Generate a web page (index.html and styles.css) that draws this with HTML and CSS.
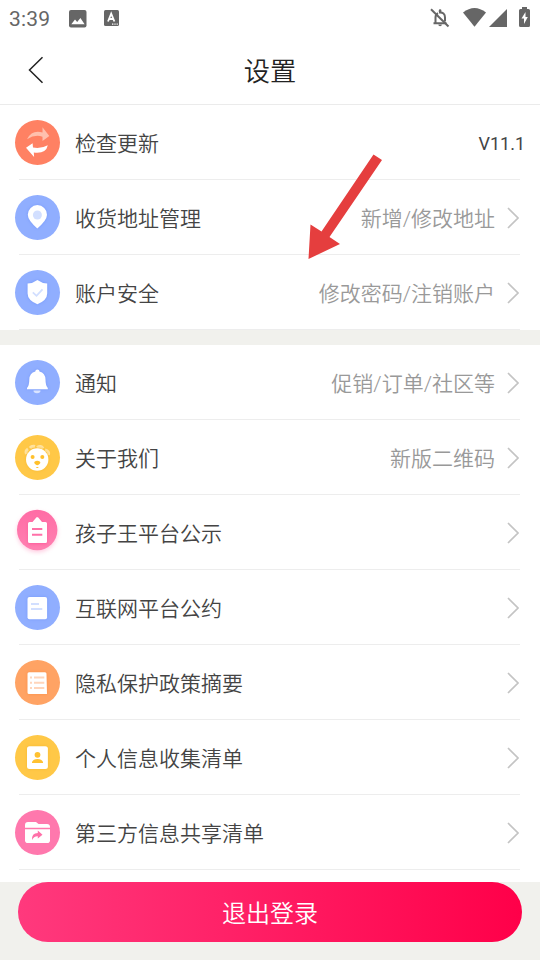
FILE: index.html
```html
<!DOCTYPE html>
<html lang="zh-CN">
<head>
<meta charset="utf-8">
<title>设置</title>
<link rel="stylesheet" href="styles.css">
</head>
<body>
<div class="screen">
  <div class="status">
    <span class="clock">3:39</span>
    <svg class="st-picture" width="18" height="18" viewBox="0 0 18 18"><rect width="17.5" height="17.5" rx="2" fill="#666"/><path d="M2.3 14.3 6 9.5l2.2 2.6 3.2-4.2 4.2 6.4z" fill="#fff"/></svg>
    <svg class="st-input" width="15" height="16" viewBox="0 0 15 16"><rect width="15" height="16" rx="1.5" fill="#666"/><path d="M4 11.500 7.200 3.700 10.400 11.500M5.200 9h4" fill="none" stroke="#fff" stroke-width="1.800"/><path d="M8 14.200h1.400m1 0h1.200m1 0h1.200" stroke="#fff" stroke-width="1.300"/></svg>
    <span class="spacer"></span>
    <svg class="st-bell" width="20" height="20" viewBox="0 0 20 20"><path d="M3.500 15.200h13M5.500 15V9.500q0-3.100 2.500-4.400M9 4.500q6-.7 6 5v4" fill="none" stroke="#666" stroke-width="2"/><path d="M8.800 4V2.500a1.300 1.300 0 0 1 2.600 0V4zM8.300 16.500h3.600a1.800 1.800 0 0 1-3.600 0z" fill="#666"/><path d="m1 1.300 17.500 17.200" stroke="#666" stroke-width="2"/></svg>
    <svg class="st-wifi" width="24" height="19" viewBox="0 0 24 19"><path d="M0 4.500Q11.500-4.500 23 4.500L11.500 18.700z" fill="#666"/></svg>
    <svg class="st-cell" width="18" height="18" viewBox="0 0 18 18"><path d="M0 18 18 0v18z" fill="#666"/></svg>
    <svg class="st-battery" width="11" height="20" viewBox="0 0 11 20"><path d="M1.500 2H3V0h5v2h1.500Q11 2 11 3.500v15q0 1.500-1.500 1.500h-8Q0 20 0 18.500v-15Q0 2 1.500 2z" fill="#666"/><path d="M6.500 5 2.500 11.500H5V17l3.800-7H6.500z" fill="#fff"/></svg>
  </div>
  <header class="header">
    <svg class="back" width="16" height="28" viewBox="0 0 16 28"><path d="M14.500 1.200 1.500 14l13 12.800" fill="none" stroke="#222" stroke-width="1.500"/></svg>
    <h1>设置</h1>
  </header>
  <main class="content">
    <ul class="group">
      <li class="row">
        <svg class="icon" viewBox="0 0 45 45"><circle cx="22.500" cy="22.500" r="22.500" fill="#ff8163"/><path d="M12 19.200Q17 9.500 27.500 12.500V7.300L34.300 16l-6.800 5v-4.300Q20 14.200 12 19.200z" fill="#ffc0ad"/><path d="M32.800 25.200Q31 34 18.800 32.500l.3 4.500L11 27.800l6.600-4.600.4 4.300q8 1.500 14.800-2.300z" fill="#fff"/></svg>
        <span class="label">检查更新</span><span class="version">V11.1</span>
      </li>
      <li class="row">
        <svg class="icon blue" viewBox="0 0 45 45"><circle cx="22.500" cy="22.500" r="22.500" fill="#90aeff"/><path class="glow" d="M22.300 33.500Q12.800 25 12.800 19.700a9.600 9.600 0 0 1 19.200 0Q32 25 22.300 33.500z" fill="#fff"/><circle cx="22.400" cy="20" r="4.500" fill="#d2dfff"/></svg>
        <span class="label">收货地址管理</span><span class="hint">新增/修改地址</span><svg class="chevron" viewBox="0 0 12 22"><path d="m1 1 10 10L1 21"/></svg>
      </li>
      <li class="row">
        <svg class="icon blue" viewBox="0 0 45 45"><circle cx="22.500" cy="22.500" r="22.500" fill="#90aeff"/><path class="glow" d="M22.400 10q4.600 3.300 9.800 3.600v9.900q0 6.700-9.800 10.800-9.800-4.100-9.800-10.800v-9.900Q18 13.300 22.400 10z" fill="#fff"/><path d="m17.800 22.300 3.700 3.500 6-6.500" fill="none" stroke="#d2dfff" stroke-width="1.800"/></svg>
        <span class="label">账户安全</span><span class="hint">修改密码/注销账户</span><svg class="chevron" viewBox="0 0 12 22"><path d="m1 1 10 10L1 21"/></svg>
      </li>
    </ul>
    <ul class="group">
      <li class="row">
        <svg class="icon blue" viewBox="0 0 45 45"><circle cx="22.500" cy="22.500" r="22.500" fill="#90aeff"/><path class="glow" d="M20.300 11.500a2.100 2.100 0 0 1 4.200 0q5.800 1.500 6 8 0 6 2.300 8.500v1.200H12v-1.200q2.300-2.500 2.300-8.500.2-6.500 6-8z" fill="#fff"/><path d="M18.500 30.500h7a3.500 2.800 0 0 1-7 0z" fill="#d9e4ff"/></svg>
        <span class="label">通知</span><span class="hint">促销/订单/社区等</span><svg class="chevron" viewBox="0 0 12 22"><path d="m1 1 10 10L1 21"/></svg>
      </li>
      <li class="row">
        <svg class="icon yellow" viewBox="0 0 45 45"><circle cx="22.500" cy="22.500" r="22.500" fill="#ffc847"/><path d="M11.500 19a4 4 0 0 1 1.500-5M15 13a4.500 4 0 0 1 5-1.500M22 12.500q4-2.500 6 1M30 15q4.500 1 3.500 5" fill="none" stroke="#ffe3a0" stroke-width="3"/><circle class="glow" cx="22.200" cy="24.500" r="11.200" fill="#fff"/><circle cx="17.600" cy="22" r="2" fill="#ffc02c"/><circle cx="27.300" cy="22" r="2" fill="#ffc02c"/><path d="M22.300 25.800c2 0 3.500 1 3 2.300-.5 1.200-2 2-3 2.100-1-.1-2.500-.9-3-2.100-.5-1.300 1-2.300 3-2.300zM20.800 32q1.500 2 3 0z" fill="#ffc02c"/></svg>
        <span class="label">关于我们</span><span class="hint">新版二维码</span><svg class="chevron" viewBox="0 0 12 22"><path d="m1 1 10 10L1 21"/></svg>
      </li>
      <li class="row">
        <svg class="icon pink" viewBox="0 0 45 45"><defs><linearGradient id="notice" x2="0" y2="1"><stop stop-color="#ff6ca5"/><stop offset="1" stop-color="#ff80b1"/></linearGradient></defs><circle class="halo" cx="22.200" cy="20" r="20.200" fill="url(#notice)"/><path class="glow" d="m17.500 12 4-4.800h1.500l4 4.800h3.500q1.500 0 1.500 1.500v18q0 1.500-1.500 1.500h-16Q13 33 13 31.500v-18q0-1.500 1.500-1.500z" fill="#fff"/><path d="M17 19h10.300M17 24.700h10.300" stroke="#ff70a8" stroke-width="2"/></svg>
        <span class="label">孩子王平台公示</span><svg class="chevron" viewBox="0 0 12 22"><path d="m1 1 10 10L1 21"/></svg>
      </li>
      <li class="row">
        <svg class="icon blue" viewBox="0 0 45 45"><circle cx="22.500" cy="22.500" r="22.500" fill="#90aeff"/><rect class="glow" x="12.500" y="12" width="19.600" height="22.200" rx="2" fill="#fff"/><path d="M16 18.900h8M16 24h11.300" stroke="#d2dfff" stroke-width="2"/></svg>
        <span class="label">互联网平台公约</span><svg class="chevron" viewBox="0 0 12 22"><path d="m1 1 10 10L1 21"/></svg>
      </li>
      <li class="row">
        <svg class="icon orange" viewBox="0 0 45 45"><circle cx="22.500" cy="22.500" r="22.500" fill="#ffa364"/><path class="glow" d="M14 12.200h16q1.500 0 1.500 1.500l.5 20.300H14q-1.500 0-1.500-1.500V13.700q0-1.500 1.500-1.500z" fill="#fff"/><path d="M15 17.500h2m2 0h10.300M15 22.800h2m2 0h10.300M15 28.100h2m2 0h10.300" stroke="#ffd5bb" stroke-width="2"/></svg>
        <span class="label">隐私保护政策摘要</span><svg class="chevron" viewBox="0 0 12 22"><path d="m1 1 10 10L1 21"/></svg>
      </li>
      <li class="row">
        <svg class="icon yellow" viewBox="0 0 45 45"><circle cx="22.500" cy="22.500" r="22.500" fill="#ffc847"/><rect class="glow" x="12" y="11.200" width="20.900" height="22.900" rx="2.500" fill="#fff"/><circle cx="22.500" cy="19.800" r="2.900" fill="#ffc130"/><path d="M17 28v-1q1.200-3 5.500-3t5.500 3v1z" fill="#ffc130"/></svg>
        <span class="label">个人信息收集清单</span><svg class="chevron" viewBox="0 0 12 22"><path d="m1 1 10 10L1 21"/></svg>
      </li>
      <li class="row">
        <svg class="icon pink" viewBox="0 0 45 45"><circle cx="22.500" cy="22.500" r="22.500" fill="#ff78ad"/><path d="M10 17.700V15q0-3 3-3h8l2.500 2H32q3 0 3 3v.7z" fill="#fff"/><path d="M10 19.200h25v11q0 2.800-2.800 2.800H12.800Q10 33 10 30.200z" fill="#fff"/><path d="M17 30q-.5-6.800 5.800-7v-2.500l4.700 4.200-4.700 3.800v-2.300q-4-.2-5.800 3.800z" fill="#ff70a8"/></svg>
        <span class="label">第三方信息共享清单</span><svg class="chevron" viewBox="0 0 12 22"><path d="m1 1 10 10L1 21"/></svg>
      </li>
    </ul>
  </main>
  <footer class="footer"><button class="logout" type="button">退出登录</button></footer>
  <svg class="pointer" width="76" height="106" viewBox="0 0 76 106"><path d="M65.500.5 74 6 21.500 83l10.500 7L.5 105 2.500 70.500l11 7z" fill="#e53e3e"/></svg>
</div>
</body>
</html>
```
FILE: styles.css
```css
* { box-sizing: border-box; }

body {
  margin: 0;
  background: #f1f1ed;
  color: #444;
  font-family: Roboto, "Noto Sans CJK SC", sans-serif;
}

.screen {
  position: relative;
  display: flex;
  flex-direction: column;
  width: 540px;
  height: 960px;
  overflow: hidden;
}

.status {
  display: flex;
  flex: none;
  align-items: flex-start;
  height: 37px;
  padding: 0 10px 0 9px;
  background: #fff;
}
.status svg { flex: none; }
.clock {
  width: 60px;
  padding-top: 7px;
  color: #666;
  font-size: 21px;
  font-weight: 450;
  line-height: 24px;
  letter-spacing: .2px;
}
.st-picture { margin-top: 10px; }
.st-input { margin: 10px 0 0 17px; }
.spacer { flex: 1; }
.st-bell { margin: 8px 13px 0 0; }
.st-wifi { margin: 8px 2px 0 0; }
.st-cell { margin: 9px 12px 0 0; }
.st-battery { margin-top: 7px; }

.header {
  display: grid;
  grid-template-columns: 60px 1fr 60px;
  flex: none;
  align-items: center;
  height: 68px;
  border-bottom: 1px solid #ebebeb;
  background: #fff;
}
.back { margin: -2px 0 0 28px; }
h1 {
  margin: 0;
  padding-top: 2px;
  color: #222;
  font-size: 26.25px;
  font-weight: 350;
  line-height: 40px;
  text-align: center;
}

.content {
  display: flex;
  flex: none;
  flex-direction: column;
  gap: 15px;
  height: 777px;
  overflow: hidden;
}
.group {
  flex: none;
  margin: 0;
  padding: 0;
  background: #fff;
  list-style: none;
}
.group:last-child { height: 540px; }
.row {
  display: flex;
  align-items: center;
  height: 75px;
  padding: 0 21px 0 15px;
  background: linear-gradient(#ededed, #ededed) 19px 74px / 501px 1px no-repeat;
}
.icon {
  flex: none;
  width: 45px;
  height: 45px;
  margin-right: 15px;
  overflow: visible;
}
.label {
  flex: 1;
  padding-top: 3px;
  font-size: 21px;
  font-weight: 350;
  line-height: 30px;
}
.hint {
  padding-top: 3px;
  color: #999;
  font-size: 21px;
  font-weight: 350;
  line-height: 30px;
}
.version {
  margin-right: -6px;
  padding-top: 2px;
  font-size: 18px;
}
.chevron {
  flex: none;
  width: 12px;
  height: 22px;
  margin-left: 12px;
  fill: none;
  stroke: #c4c4c4;
  stroke-width: 1.7;
}
.blue .glow { filter: drop-shadow(0 0 1.5px #7598fa); }
.yellow .glow { filter: drop-shadow(0 0 1.5px #f7b92e); }
.orange .glow { filter: drop-shadow(0 0 1.5px #fb8e45); }
.pink .glow { filter: drop-shadow(0 1px 1.5px #ff5c9b); }
.halo { filter: drop-shadow(0 2px 2px rgba(255, 112, 168, .35)); }

.footer {
  flex: 1;
  padding: 0 18px;
}
.logout {
  display: block;
  width: 100%;
  height: 60px;
  padding: 4px 0 0;
  border: 0;
  border-radius: 30px;
  background: linear-gradient(90deg, #ff397d, #ff0049);
  color: #fff;
  font: 350 24px/56px Roboto, "Noto Sans CJK SC", sans-serif;
}

.pointer {
  position: absolute;
  top: 154px;
  left: 307.5px;
}
```
